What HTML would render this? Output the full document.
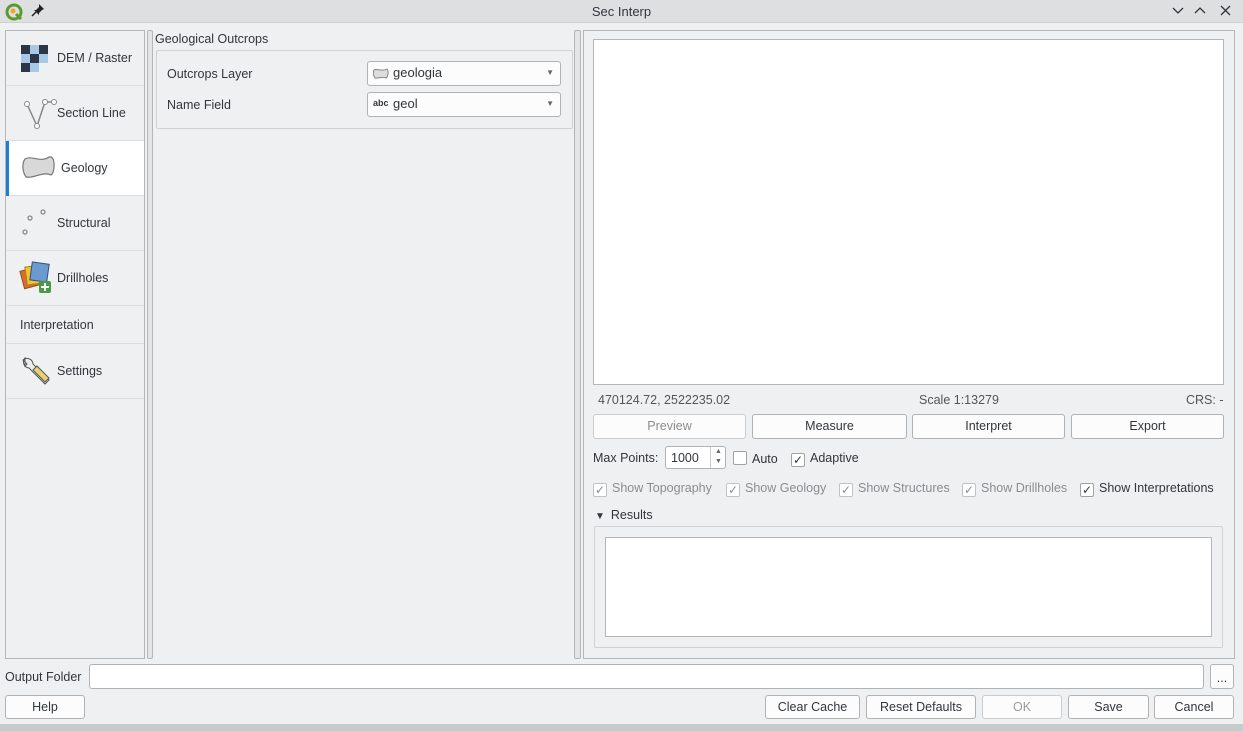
<!DOCTYPE html><html><head><style>
*{box-sizing:border-box;margin:0;padding:0}
body{width:1243px;height:731px;background:#eff0f1;font-family:"Liberation Sans",sans-serif;font-size:12.5px;color:#31363b;position:relative;overflow:hidden}
.a{position:absolute}
.btn{position:absolute;background:#fcfcfc;border:1px solid #b0b2b4;border-radius:3px;text-align:center;line-height:22px}
.it{position:absolute;left:1px;width:137px;border-bottom:1px solid #dcdddf}
.it span{position:absolute;left:50px;top:50%;transform:translateY(-50%)}
.ic{position:absolute;left:12px;top:50%;transform:translateY(-50%)}
.cb{display:inline-block;width:14px;height:14px;border:1px solid #a0a2a4;background:#fff;border-radius:2px;vertical-align:-2px;margin-right:5px;font-size:12px;line-height:12px;text-align:center;color:#31363b}
.dis{color:#8a8d90}.dis .cb{color:#8a8d90;border-color:#c0c2c4}
</style></head><body>
<div class="a" style="left:0;top:0;width:1243px;height:23px;background:#dedfe1;border-bottom:1px solid #cfd0d2"></div>
<svg class="a" style="left:4px;top:2px" width="20" height="20"><circle cx="10" cy="10" r="7" fill="none" stroke="#5b9b2c" stroke-width="3"/><circle cx="9" cy="9" r="2.5" fill="#f0a030"/><path d="M12 12l5 5" stroke="#5b9b2c" stroke-width="3"/></svg>
<svg class="a" style="left:31px;top:3px" width="14" height="14"><path d="M8 1l5 5-2 1-3 3 0 2-5-5 2 0 3-3z" fill="#222"/><path d="M5 9l-4 4" stroke="#222" stroke-width="1.5"/></svg>
<div class="a" style="left:0;width:1243px;top:4px;text-align:center;font-size:13px">Sec Interp</div>
<svg class="a" style="left:1170px;top:5px" width="66" height="12" stroke="#31363b" stroke-width="1.3" fill="none"><path d="M3 3l5 5 5-5"/><path d="M25 8l5-5 5 5"/><path d="M51 1l9 9M60 1l-9 9"/></svg>

<div class="a" style="left:5px;top:30px;width:140px;height:629px;border:1px solid #b5b6b8;background:#eff0f1">
<div class="it" style="top:0;height:55px"><svg class="ic" width="30" height="30"><rect x="2" y="2" width="27" height="27" fill="#a8c8e8"/><rect x="2" y="2" width="9" height="9" fill="#2c3646"/><rect x="20" y="2" width="9" height="9" fill="#2c3646"/><rect x="11" y="11" width="9" height="9" fill="#2c3646"/><rect x="2" y="20" width="9" height="9" fill="#2c3646"/><rect x="20" y="20" width="9" height="9" fill="#eff0f1"/></svg><span>DEM / Raster</span></div>
<div class="it" style="top:55px;height:55px"><svg class="ic" width="40" height="34" style="left:10px"><path d="M10 8L20 30 28 6 38 6" fill="none" stroke="#888" stroke-width="1.5"/><circle cx="10" cy="8" r="2.5" fill="#fff" stroke="#888"/><circle cx="20" cy="30" r="2.5" fill="#fff" stroke="#888"/><circle cx="28" cy="6" r="2.5" fill="#fff" stroke="#888"/><circle cx="37" cy="6" r="2.5" fill="#fff" stroke="#888"/></svg><span>Section Line</span></div>
<div class="it" style="top:110px;height:55px;background:#fff"><div class="a" style="left:-1px;top:0;width:3px;height:55px;background:#1d7ed6"></div><svg class="ic" width="36" height="30" style="left:14px"><path d="M4 6C10 2 20 10 28 4 35 2 34 20 30 22 22 18 12 26 5 24 1 18 1 10 4 6Z" fill="#d8d8d8" stroke="#777" stroke-width="1.2"/></svg><span style="left:54px">Geology</span></div>
<div class="it" style="top:165px;height:55px"><svg class="ic" width="34" height="34"><circle cx="24" cy="6" r="2" fill="none" stroke="#888" stroke-width="1.3"/><circle cx="11" cy="12" r="2" fill="none" stroke="#888" stroke-width="1.3"/><circle cx="6" cy="26" r="2" fill="none" stroke="#888" stroke-width="1.3"/></svg><span>Structural</span></div>
<div class="it" style="top:220px;height:55px"><svg class="ic" width="34" height="34"><rect x="3" y="8" width="16" height="18" fill="#e06a2c" stroke="#905020" transform="rotate(-15 11 17)"/><rect x="7" y="5" width="16" height="18" fill="#f2c230" stroke="#a08020" transform="rotate(-8 15 14)"/><rect x="12" y="2" width="17" height="18" fill="#6a9ad0" stroke="#305080" transform="rotate(8 20 11)"/><rect x="20" y="20" width="12" height="12" rx="2" fill="#4a9a4a"/><path d="M26 22v8M22 26h8" stroke="#fff" stroke-width="2"/></svg><span>Drillholes</span></div>
<div class="it" style="top:275px;height:38px"><span style="left:13px">Interpretation</span></div>
<div class="it" style="top:313px;height:55px"><svg class="ic" width="34" height="34"><path d="M6 4a6 6 0 0 0 4 10l16 16 4-4-16-16a6 6 0 0 0-10-4l4 4-2 2z" fill="#eee" stroke="#555"/><path d="M14 16l12 12 4-4-12-12z" fill="#e8d070" stroke="#555"/></svg><span>Settings</span></div>
</div>
<div class="a" style="left:147px;top:30px;width:6px;height:629px;border:1px solid #b5b6b8;border-radius:2px;background:#e3e4e6"></div>
<div class="a" style="left:574px;top:30px;width:7px;height:629px;border:1px solid #b5b6b8;border-radius:2px;background:#e3e4e6"></div>

<div class="a" style="left:155px;top:32px">Geological Outcrops</div>
<div class="a" style="left:156px;top:50px;width:417px;height:79px;border:1px solid #d0d1d3;border-radius:2px"></div>
<div class="a" style="left:167px;top:67px">Outcrops Layer</div>
<div class="a" style="left:167px;top:98px">Name Field</div>
<div class="btn" style="left:367px;top:61px;width:194px;height:25px;text-align:left;padding-left:25px;font-size:13px">geologia<svg class="a" style="left:5px;top:6px" width="16" height="11"><path d="M1 2C4 0 9 4 14 1 16 3 15 9 13 10 9 8 5 11 2 10 0 7 0 4 1 2Z" fill="#ddd" stroke="#888"/></svg><span class="a" style="right:6px;top:0;font-size:8px;color:#666">▼</span></div>
<div class="btn" style="left:367px;top:92px;width:194px;height:25px;text-align:left;padding-left:25px;font-size:13px">geol<span class="a" style="left:5px;top:-1px;font-size:9px;font-weight:bold">abc</span><span class="a" style="right:6px;top:0;font-size:8px;color:#666">▼</span></div>

<div class="a" style="left:583px;top:30px;width:652px;height:629px;border:1px solid #b5b6b8"></div>
<div class="a" style="left:593px;top:39px;width:631px;height:346px;background:#fff;border:1px solid #b5b6b8"></div>
<div class="a" style="left:598px;top:393px;color:#555">470124.72, 2522235.02</div>
<div class="a" style="left:919px;top:393px;color:#555">Scale 1:13279</div>
<div class="a" style="left:1186px;top:393px;color:#555">CRS: -</div>
<div class="btn" style="left:593px;top:414px;width:153px;height:25px;color:#8a8d90;border-color:#ccc">Preview</div>
<div class="btn" style="left:752px;top:414px;width:155px;height:25px">Measure</div>
<div class="btn" style="left:912px;top:414px;width:153px;height:25px">Interpret</div>
<div class="btn" style="left:1071px;top:414px;width:153px;height:25px">Export</div>
<div class="a" style="left:593px;top:451px">Max Points:</div>
<div class="a" style="left:665px;top:446px;width:61px;height:23px;background:#fff;border:1px solid #b0b2b4;border-radius:3px;padding:4px 0 0 5px">1000<span class="a" style="left:44px;top:0;height:21px;border-left:1px solid #ccc;width:16px;font-size:7px;line-height:10px;text-align:center;color:#666">▲<br>▼</span></div>
<div class="a" style="left:733px;top:451px"><span class="cb"></span>Auto</div>
<div class="a" style="left:791px;top:451px"><span class="cb">✓</span>Adaptive</div>
<div class="a dis" style="left:593px;top:481px"><span class="cb">✓</span>Show Topography</div>
<div class="a dis" style="left:726px;top:481px"><span class="cb">✓</span>Show Geology</div>
<div class="a dis" style="left:839px;top:481px"><span class="cb">✓</span>Show Structures</div>
<div class="a dis" style="left:962px;top:481px"><span class="cb">✓</span>Show Drillholes</div>
<div class="a" style="left:1080px;top:481px"><span class="cb">✓</span>Show Interpretations</div>
<div class="a" style="left:595px;top:508px"><span style="font-size:10px;margin-right:6px">▼</span>Results</div>
<div class="a" style="left:594px;top:526px;width:629px;height:122px;border:1px solid #d0d1d3;border-radius:2px"></div>
<div class="a" style="left:605px;top:537px;width:607px;height:100px;background:#fff;border:1px solid #b5b6b8"></div>

<div class="a" style="left:5px;top:670px">Output Folder</div>
<div class="a" style="left:89px;top:664px;width:1115px;height:25px;background:#fff;border:1px solid #b0b2b4;border-radius:3px"></div>
<div class="btn" style="left:1210px;top:664px;width:24px;height:25px;line-height:26px">...</div>
<div class="btn" style="left:5px;top:695px;width:80px;height:24px">Help</div>
<div class="btn" style="left:765px;top:695px;width:95px;height:24px">Clear Cache</div>
<div class="btn" style="left:866px;top:695px;width:110px;height:24px">Reset Defaults</div>
<div class="btn" style="left:982px;top:695px;width:80px;height:24px;color:#9a9c9e;border-color:#ccc">OK</div>
<div class="btn" style="left:1068px;top:695px;width:81px;height:24px">Save</div>
<div class="btn" style="left:1154px;top:695px;width:80px;height:24px">Cancel</div>
<div class="a" style="left:0;top:724px;width:1243px;height:7px;background:#c9cacc"></div>
</body></html>
